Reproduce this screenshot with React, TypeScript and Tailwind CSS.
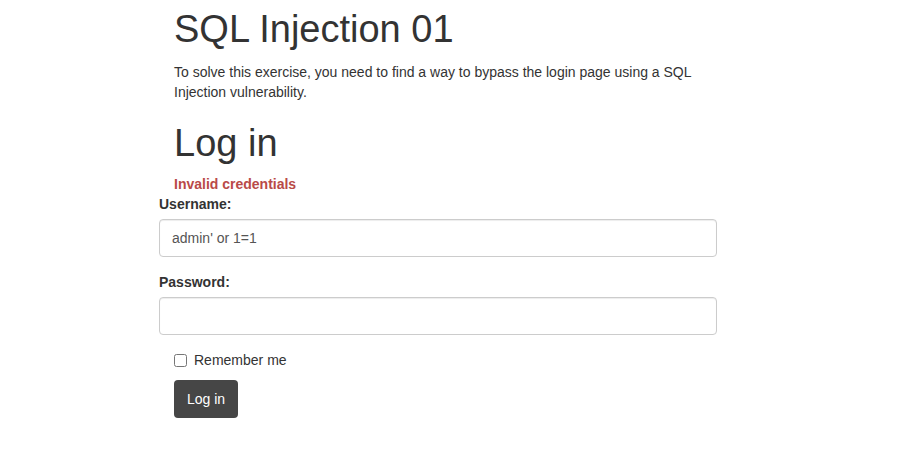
import { useState } from "react";

const App = () => {
  const [username, setUsername] = useState("admin' or 1=1");
  const [password, setPassword] = useState("");
  const [remember, setRemember] = useState(false);

  return (
    <div className="min-h-[449px] bg-white text-[14px] leading-[20px] text-[#333] font-['Liberation_Sans',Arial,sans-serif]">
      <div className="ml-[159px] w-[558px] pt-[8px]">
        <div className="px-[15px]">
          <h1 className="text-[38px] leading-[42px] font-normal">SQL Injection 01</h1>
          <p className="mt-[12px] pr-[10px]">
            To solve this exercise, you need to find a way to bypass the login page using a SQL Injection vulnerability.
          </p>
          <h1 className="mt-[20px] text-[38px] leading-[42px] font-normal">Log in</h1>
          <div className="mt-[10px] font-bold text-[#b94a48]">Invalid credentials</div>
        </div>
        <form onSubmit={(e) => e.preventDefault()}>
          <div className="mb-[15px]">
            <label className="mb-[5px] block font-bold">Username:</label>
            <input
              type="text"
              value={username}
              onChange={(e) => setUsername(e.target.value)}
              className="block h-[38px] w-full rounded-[4px] border border-[#ccc] px-[12px] text-[14px] text-[#555] shadow-[inset_0_1px_1px_rgba(0,0,0,0.075)] outline-none"
            />
          </div>
          <div className="mb-[15px]">
            <label className="mb-[5px] block font-bold">Password:</label>
            <input
              type="password"
              value={password}
              onChange={(e) => setPassword(e.target.value)}
              className="block h-[38px] w-full rounded-[4px] border border-[#ccc] px-[12px] text-[14px] text-[#555] shadow-[inset_0_1px_1px_rgba(0,0,0,0.075)] outline-none"
            />
          </div>
          <div className="px-[15px]">
            <label className="flex items-center gap-[7px]">
              <input
                type="checkbox"
                checked={remember}
                onChange={(e) => setRemember(e.target.checked)}
                className="m-0 h-[13px] w-[13px]"
              />
              <span>Remember me</span>
            </label>
            <button className="mt-[10px] h-[38px] rounded-[4px] bg-[#464646] px-[13px] text-[14px] text-white">
              Log in
            </button>
          </div>
        </form>
      </div>
    </div>
  );
};

export default App;
